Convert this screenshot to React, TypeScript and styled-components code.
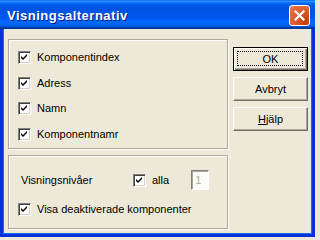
import React from "react";
import styled, { createGlobalStyle } from "styled-components";

const GlobalStyle = createGlobalStyle`
	html, body {
		margin: 0;
		padding: 0;
		background: #ece9d8;
	}
	* {
		box-sizing: border-box;
	}
`;

const Window = styled.div`
	width: 315px;
	height: 237px;
	display: flex;
	flex-direction: column;
	font-family: Tahoma, "Liberation Sans", Arial, sans-serif;
	font-size: 11px;
	color: #000;
`;

const TitleBar = styled.div`
	height: 29px;
	flex: none;
	display: flex;
	align-items: center;
	justify-content: space-between;
	padding: 0 5px 0 7px;
	background: linear-gradient(
		to bottom,
		#0058ee 0%,
		#3593ff 4%,
		#288eff 6%,
		#127dff 8%,
		#036ffc 10%,
		#0262ee 14%,
		#0057e5 20%,
		#0054e3 24%,
		#0055eb 56%,
		#005bf5 66%,
		#026afe 76%,
		#0062ef 86%,
		#0052d6 92%,
		#0040ab 94%,
		#003092 100%
	);
`;

const Title = styled.span`
	color: #fff;
	font-family: "Liberation Sans", Arial, sans-serif;
	font-weight: bold;
	font-size: 13px;
	letter-spacing: 0.5px;
	text-shadow: 1px 1px 0 #0a1883;
	margin-top: 1px;
`;

const CloseButton = styled.div`
	width: 21px;
	height: 21px;
	border: 1px solid #fff;
	border-radius: 3px;
	background: radial-gradient(circle at 85% 85%, #c23a10 0%, #dc5a30 45%, #e56a40 80%, #f09070 100%);
	display: flex;
	align-items: center;
	justify-content: center;
	margin-top: 2px;
`;

const Client = styled.div`
	flex: 1;
	display: flex;
	gap: 5px;
	padding: 10px 4px 0 5px;
	background: #ece9d8;
	border: 3px solid #0831d9;
	border-top: none;
	box-shadow: inset 1px 0 0 #166aee, inset -1px 0 0 #166aee, inset 0 -1px 0 #166aee;
`;

const LeftColumn = styled.div`
	width: 220px;
	display: flex;
	flex-direction: column;
	gap: 6px;
`;

const GroupBox = styled.div<{ $height: number }>`
	height: ${(p) => p.$height}px;
	border: 1px solid #aca899;
	box-shadow: inset 1px 1px 0 #fff, 1px 1px 0 #fff;
	padding: 11px 9px 0 9px;
	display: flex;
	flex-direction: column;
`;

const Row = styled.div<{ $gap?: number }>`
	height: 13px;
	display: flex;
	align-items: center;
	margin-bottom: ${(p) => p.$gap ?? 0}px;
`;

const Box = styled.span`
	width: 13px;
	height: 13px;
	flex: none;
	background: #fff;
	border-top: 1px solid #808080;
	border-left: 1px solid #808080;
	border-right: 1px solid #fff;
	border-bottom: 1px solid #fff;
	box-shadow: inset 1px 1px 0 #404040, inset -1px -1px 0 #d4d0c8;
	display: flex;
	align-items: center;
	justify-content: center;
`;

const Label = styled.span<{ $indent?: number }>`
	margin-left: ${(p) => p.$indent ?? 6}px;
	white-space: nowrap;
	line-height: 13px;
`;

const LevelRow = styled.div`
	height: 20px;
	display: flex;
	align-items: center;
	margin-top: 3px;
	margin-bottom: 13px;
`;

const LevelLabel = styled.span`
	width: 115px;
	padding-left: 3px;
	white-space: nowrap;
`;

const LevelInput = styled.div`
	width: 18px;
	height: 20px;
	margin-left: 22px;
	background: #fbfbf8;
	border-top: 1px solid #808080;
	border-left: 1px solid #808080;
	border-right: 1px solid #fff;
	border-bottom: 1px solid #fff;
	box-shadow: inset 1px 1px 0 #aca899;
	color: #aca899;
	padding: 2px 0 0 3px;
	line-height: 14px;
`;

const ButtonColumn = styled.div`
	width: 75px;
	display: flex;
	flex-direction: column;
	gap: 6px;
	padding-top: 8px;
`;

const Button = styled.div<{ $default?: boolean }>`
	height: 24px;
	display: flex;
	align-items: center;
	justify-content: center;
	background: #ece9d8;
	border-top: 1px solid ${(p) => (p.$default ? "#000" : "#fff")};
	border-left: 1px solid ${(p) => (p.$default ? "#000" : "#fff")};
	border-right: 1px solid ${(p) => (p.$default ? "#000" : "#716f64")};
	border-bottom: 1px solid ${(p) => (p.$default ? "#000" : "#716f64")};
	box-shadow: ${(p) =>
		p.$default
			? "inset 1px 1px 0 #fff, inset -1px -1px 0 #716f64, inset -2px -2px 0 #aca899"
			: "inset -1px -1px 0 #aca899"};
	position: relative;
`;

const FocusRing = styled.span`
	position: absolute;
	inset: 3px 4px 4px 3px;
	border: 1px dotted #000;
`;

const Underline = styled.span`
	text-decoration: underline;
`;

const Check = () => (
	<svg width="7" height="7" viewBox="0 0 7 7">
		<path d="M0 2 L2 4 L6 0 L6 2 L2 6 L0 4 Z" fill="#000" />
	</svg>
);

const CheckBox = ({ label, indent }: { label: string; indent?: number }) => (
	<>
		<Box>
			<Check />
		</Box>
		<Label $indent={indent}>{label}</Label>
	</>
);

const App = () => {
	const items = ["Komponentindex", "Adress", "Namn", "Komponentnamr"];
	return (
		<>
			<GlobalStyle />
			<Window>
				<TitleBar>
					<Title>Visningsalternativ</Title>
					<CloseButton>
						<svg width="11" height="11" viewBox="0 0 11 11">
							<path d="M1.5 1.5 L9.5 9.5 M9.5 1.5 L1.5 9.5" stroke="#fff" strokeWidth="2.2" strokeLinecap="square" />
						</svg>
					</CloseButton>
				</TitleBar>
				<Client>
					<LeftColumn>
						<GroupBox $height={110}>
							{items.map((item, i) => (
								<Row key={item} $gap={i < items.length - 1 ? 12.5 : 0}>
									<CheckBox label={item} />
								</Row>
							))}
						</GroupBox>
						<GroupBox $height={74}>
							<LevelRow>
								<LevelLabel>Visningsnivåer</LevelLabel>
								<CheckBox label="alla" />
								<LevelInput>1</LevelInput>
							</LevelRow>
							<Row>
								<CheckBox label="Visa deaktiverade komponenter" />
							</Row>
						</GroupBox>
					</LeftColumn>
					<ButtonColumn>
						<Button $default>
							<FocusRing />
							OK
						</Button>
						<Button>Avbryt</Button>
						<Button>
							<span>
								<Underline>H</Underline>jälp
							</span>
						</Button>
					</ButtonColumn>
				</Client>
			</Window>
		</>
	);
};

export default App;
